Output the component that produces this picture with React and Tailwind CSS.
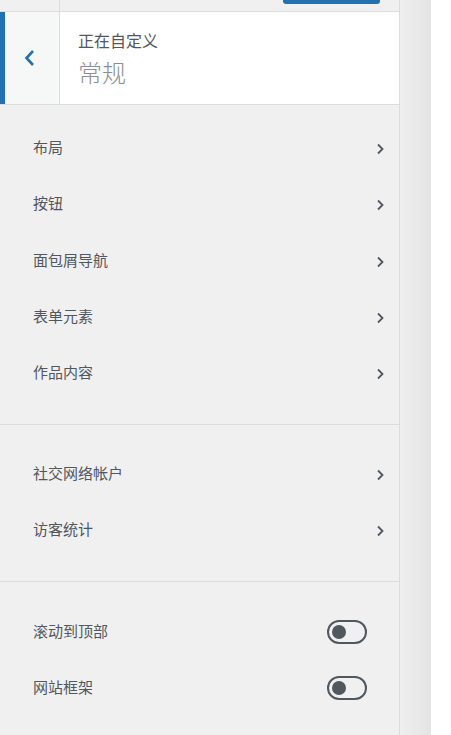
import React from "react";

const font = { fontFamily: '"Noto Sans CJK SC", "Noto Sans", sans-serif' };

function Chevron() {
  return (
    <svg width="10" height="12" viewBox="0 0 10 12" className="shrink-0 mt-[2px]">
      <path d="M3 1.5 L7.5 6 L3 10.5" fill="none" stroke="#50575e" strokeWidth="1.8" />
    </svg>
  );
}

function Item({ label, h = "h-[56px]" }) {
  return (
    <div className={`flex items-center justify-between pl-[33px] pr-[14px] ${h}`}>
      <span className="text-[15px] text-[#50575e] leading-none mb-[3px]">{label}</span>
      <Chevron />
    </div>
  );
}

function Toggle({ label }) {
  return (
    <div className="flex items-center justify-between pl-[33px] pr-[32px] h-[56px]">
      <span className="text-[15px] text-[#50575e] leading-none mb-[3px]">{label}</span>
      <div className="w-[40px] h-[24px] rounded-full border-2 border-[#50575e] flex items-center pl-[3px]">
        <div className="w-[14px] h-[14px] rounded-full bg-[#50575e]" />
      </div>
    </div>
  );
}

export default function App() {
  return (
    <div className="flex w-[451px] h-[735px] overflow-hidden bg-white" style={font}>
      <div className="w-[400px] h-full bg-[#f0f0f1] border-r border-[#dcdcde] flex flex-col">
        {/* top bar */}
        <div className="h-[12px] flex border-b border-[#dcdcde] bg-[#f0f0f1]">
          <div className="w-[60px] border-r border-[#dcdcde]" />
          <div className="flex-1 flex justify-end pr-[19px]">
            <div className="w-[97px] h-[4px] bg-[#2271b1] rounded-b-[3px]" />
          </div>
        </div>
        {/* header */}
        <div className="h-[93px] flex bg-white border-b border-[#dcdcde]">
          <div className="w-[5px] bg-[#2271b1]" />
          <div className="w-[55px] bg-[#f6f7f7] border-r border-[#dcdcde] flex items-center pl-[18px]">
            <svg width="14" height="18" viewBox="0 0 14 18">
              <path d="M10 2 L3.5 9 L10 16" fill="none" stroke="#2271b1" strokeWidth="2.6" />
            </svg>
          </div>
          <div className="flex flex-col pl-[18px] pt-[18px]">
            <span className="text-[16px] leading-[20px] text-[#50575e]">正在自定义</span>
            <span className="text-[24px] leading-[32px] mt-[6px] text-[#8c8f94] font-light">常规</span>
          </div>
        </div>
        {/* section 1 */}
        <div className="pt-[15px] pb-[23px] border-b border-[#dcdcde]">
          <Item label="布局" h="h-[56.25px]" />
          <Item label="按钮" h="h-[56.25px]" />
          <Item label="面包屑导航" h="h-[56.25px]" />
          <Item label="表单元素" h="h-[56.25px]" />
          <Item label="作品内容" h="h-[56.25px]" />
        </div>
        {/* section 2 */}
        <div className="pt-[21px] pb-[23px] border-b border-[#dcdcde]">
          <Item label="社交网络帐户" />
          <Item label="访客统计" />
        </div>
        {/* section 3 */}
        <div className="pt-[22px]">
          <Toggle label="滚动到顶部" />
          <Toggle label="网站框架" />
        </div>
      </div>
      <div className="w-[31px] h-full bg-gradient-to-r from-[#efefef] to-[#e4e4e4]" />
      <div className="flex-1 bg-white" />
    </div>
  );
}
